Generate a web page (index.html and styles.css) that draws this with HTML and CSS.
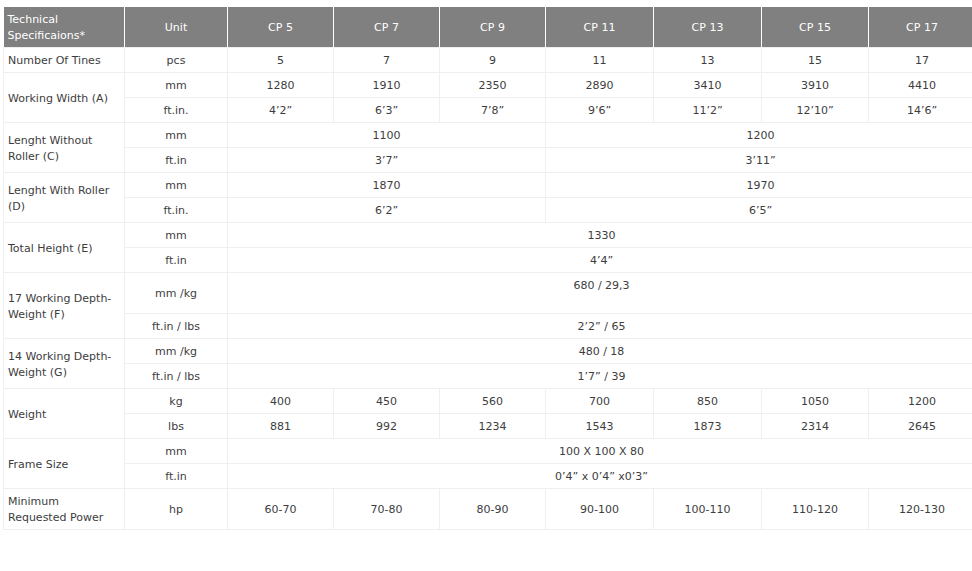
FILE: index.html
```html
<!DOCTYPE html>
<html lang="en">
<head>
<meta charset="utf-8">
<title>Technical Specifications</title>
<link rel="stylesheet" href="styles.css">
</head>
<body>
<div class="wrap">
<table class="spec">
  <colgroup>
    <col class="c-label"><col class="c-unit">
    <col class="c-a"><col class="c-a"><col class="c-a">
    <col class="c-b"><col class="c-b"><col class="c-c"><col class="c-c">
  </colgroup>
  <thead>
    <tr>
      <th class="label">Technical<br>Specificaions*</th>
      <th>Unit</th><th>CP 5</th><th>CP 7</th><th>CP 9</th><th>CP 11</th><th>CP 13</th><th>CP 15</th><th>CP 17</th>
    </tr>
  </thead>
  <tbody>
    <tr><td class="label">Number Of Tines</td><td>pcs</td><td>5</td><td>7</td><td>9</td><td>11</td><td>13</td><td>15</td><td>17</td></tr>
    <tr><td class="label" rowspan="2">Working Width (A)</td><td>mm</td><td>1280</td><td>1910</td><td>2350</td><td>2890</td><td>3410</td><td>3910</td><td>4410</td></tr>
    <tr><td>ft.in.</td><td>4’2”</td><td>6’3”</td><td>7’8”</td><td>9’6”</td><td>11’2”</td><td>12’10”</td><td>14’6”</td></tr>
    <tr><td class="label" rowspan="2">Lenght Without<br>Roller (C)</td><td>mm</td><td colspan="3">1100</td><td colspan="4">1200</td></tr>
    <tr><td>ft.in</td><td colspan="3">3’7”</td><td colspan="4">3’11”</td></tr>
    <tr><td class="label" rowspan="2">Lenght With Roller<br>(D)</td><td>mm</td><td colspan="3">1870</td><td colspan="4">1970</td></tr>
    <tr><td>ft.in.</td><td colspan="3">6’2”</td><td colspan="4">6’5”</td></tr>
    <tr><td class="label" rowspan="2">Total Height (E)</td><td>mm</td><td colspan="7">1330</td></tr>
    <tr><td>ft.in</td><td colspan="7">4’4”</td></tr>
    <tr><td class="label" rowspan="2">17 Working Depth-<br>Weight (F)</td><td>mm /kg</td><td colspan="7" class="top">680 / 29,3<br>&nbsp;</td></tr>
    <tr><td>ft.in / lbs</td><td colspan="7">2’2” / 65</td></tr>
    <tr><td class="label" rowspan="2">14 Working Depth-<br>Weight (G)</td><td>mm /kg</td><td colspan="7">480 / 18</td></tr>
    <tr><td>ft.in / lbs</td><td colspan="7">1’7” / 39</td></tr>
    <tr><td class="label" rowspan="2">Weight</td><td>kg</td><td>400</td><td>450</td><td>560</td><td>700</td><td>850</td><td>1050</td><td>1200</td></tr>
    <tr><td>lbs</td><td>881</td><td>992</td><td>1234</td><td>1543</td><td>1873</td><td>2314</td><td>2645</td></tr>
    <tr><td class="label" rowspan="2">Frame Size</td><td>mm</td><td colspan="7">100 X 100 X 80</td></tr>
    <tr><td>ft.in</td><td colspan="7">0’4” x 0’4” x0’3”</td></tr>
    <tr><td class="label">Minimum<br>Requested Power</td><td>hp</td><td>60-70</td><td>70-80</td><td>80-90</td><td>90-100</td><td>100-110</td><td>110-120</td><td>120-130</td></tr>
  </tbody>
</table>
</div>
</body>
</html>
```

FILE: styles.css
```css
html, body {
  margin: 0;
  padding: 0;
  background: #fff;
  overflow: hidden;
}
.wrap {
  padding: 7px 0 0 3px;
  width: 980px;
}
.spec {
  border-collapse: collapse;
  table-layout: fixed;
  width: 973px;
  font-family: "DejaVu Sans", Verdana, sans-serif;
  font-size: 11px;
  line-height: 16px;
  color: #3d3d3d;
}
.c-label { width: 121px; }
.c-unit { width: 103px; }
.c-a { width: 106px; }
.c-b { width: 108px; }
.c-c { width: 107px; }
.spec th {
  background: #808080;
  color: #fff;
  font-weight: normal;
  padding: 5px 4px 3px;
  height: 32px;
  text-align: center;
  border-left: 1px solid #fff;
  border-right: 1px solid #fff;
}
.spec th:first-child { border-left: none; }
.spec th.label { text-align: left; }
.spec td {
  border: 1px solid #efefef;
  padding: 5px 4px 3px;
  text-align: center;
  vertical-align: middle;
}
.spec td.label { text-align: left; }
.spec td.top { vertical-align: top; }
```
